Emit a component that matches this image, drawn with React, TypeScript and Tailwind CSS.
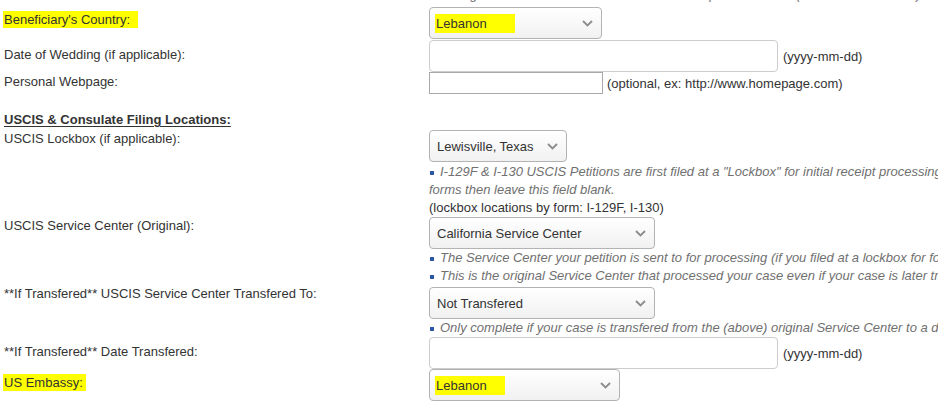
import React from 'react';

function Chevron() {
  return (
    <svg width="11" height="7" viewBox="0 0 11 7" className="shrink-0">
      <polyline points="1,1 5.5,5.5 10,1" fill="none" stroke="#8c8c8c" strokeWidth="1.8" />
    </svg>
  );
}

function Select({ value, width, mark }: { value: string; width: string; mark?: string }) {
  return (
    <div
      className={`${width} h-[32px] flex items-center justify-between pl-[7px] pr-[8px] border border-[#b3b3b3] rounded-[4px] bg-gradient-to-b from-white to-[#f1f1f1] text-[#333]`}
    >
      {mark ? <span className={`bg-[#ffff00] pl-[1px] -ml-[2px] leading-[18px] pt-[1px] ${mark}`}>{value}</span> : <span>{value}</span>}
      <Chevron />
    </div>
  );
}

function Note({ children }: { children: React.ReactNode }) {
  return (
    <div className="flex items-center italic text-[#707070] leading-[18px] whitespace-nowrap">
      <span className="w-[4px] h-[4px] bg-[#2d57a8] ml-[1px] mr-[6px] shrink-0 translate-y-[1px]" />
      <span>{children}</span>
    </div>
  );
}

export default function App() {
  return (
    <div className="w-[938px] h-[420px] overflow-hidden bg-white text-[13px] leading-[17px] text-[#333] font-['Liberation_Sans',Arial,sans-serif]">
      <div className="flex -mt-[14px]">
        <div className="w-[429px] shrink-0" />
        <div className="flex-1 min-w-0 overflow-hidden">
          <Note>If filing for a K-1 or K-3 visa and the US citizen petitioner lives (and files for the visa) abroad then please make sure to select that country.</Note>
        </div>
      </div>

      <div className="flex mt-[3px]">
        <div className="w-[429px] shrink-0 pl-[4px] pt-[4px]">
          <span className="bg-[#ffff00] -ml-[1px] pl-[1px] pr-[8px] pt-[1px] pb-[1px]">Beneficiary's Country:</span>
        </div>
        <div className="flex-1 min-w-0">
          <Select value="Lebanon" width="w-[173px]" mark="pr-[28px]" />
        </div>
      </div>

      <div className="flex mt-[1px]">
        <div className="w-[429px] shrink-0 pl-[4px] pt-[6px]">Date of Wedding (if applicable):</div>
        <div className="flex-1 min-w-0 flex items-center gap-[5px]">
          <div className="w-[349px] h-[32px] border border-[#cccccc] rounded-[4px] bg-white" />
          <span>(yyyy-mm-dd)</span>
        </div>
      </div>

      <div className="flex">
        <div className="w-[429px] shrink-0 pl-[4px] pt-[1px]">Personal Webpage:</div>
        <div className="flex-1 min-w-0 flex items-center gap-[4px]">
          <div className="w-[174px] h-[22px] border border-[#a9a9a9] bg-white" />
          <span>(optional, ex: http://www.homepage.com)</span>
        </div>
      </div>

      <div className="pl-[4px] mt-[17px] mb-[2px] font-bold underline underline-offset-[2px]">USCIS &amp; Consulate Filing Locations:</div>

      <div className="flex">
        <div className="w-[429px] shrink-0 pl-[4px]">USCIS Lockbox (if applicable):</div>
        <div className="flex-1 min-w-0 overflow-hidden">
          <Select value="Lewisville, Texas" width="w-[138px]" />
          <div className="pt-[1px] whitespace-nowrap">
            <Note>I-129F &amp; I-130 USCIS Petitions are first filed at a "Lockbox" for initial receipt processing. If you are not filing these</Note>
            <div className="italic text-[#707070] leading-[18px]">forms then leave this field blank.</div>
            <div className="leading-[17px]">(lockbox locations by form: I-129F, I-130)</div>
          </div>
        </div>
      </div>

      <div className="flex mt-[1px]">
        <div className="w-[429px] shrink-0 pl-[4px]">USCIS Service Center (Original):</div>
        <div className="flex-1 min-w-0 overflow-hidden">
          <Select value="California Service Center" width="w-[226px]" />
          <div className="mb-[2px]">
            <Note>The Service Center your petition is sent to for processing (if you filed at a lockbox for forms I-129F or I-130 then see above).</Note>
            <Note>This is the original Service Center that processed your case even if your case is later transfered to another one.</Note>
          </div>
        </div>
      </div>

      <div className="flex">
        <div className="w-[429px] shrink-0 pl-[4px] -mt-[2px]">**If Transfered** USCIS Service Center Transfered To:</div>
        <div className="flex-1 min-w-0 overflow-hidden">
          <Select value="Not Transfered" width="w-[226px]" />
          <Note>Only complete if your case is transfered from the (above) original Service Center to a different Service Center.</Note>
        </div>
      </div>

      <div className="flex">
        <div className="w-[429px] shrink-0 pl-[4px] pt-[6px]">**If Transfered** Date Transfered:</div>
        <div className="flex-1 min-w-0 flex items-center gap-[5px]">
          <div className="w-[349px] h-[32px] border border-[#cccccc] rounded-[4px] bg-white" />
          <span>(yyyy-mm-dd)</span>
        </div>
      </div>

      <div className="flex">
        <div className="w-[429px] shrink-0 pl-[4px] pt-[5px]">
          <span className="bg-[#ffff00] -ml-[1px] pl-[1px] pr-[3px] pt-[1px] pb-[1px]">US Embassy:</span>
        </div>
        <div className="flex-1 min-w-0">
          <Select value="Lebanon" width="w-[191px]" mark="pr-[18px]" />
        </div>
      </div>
    </div>
  );
}
